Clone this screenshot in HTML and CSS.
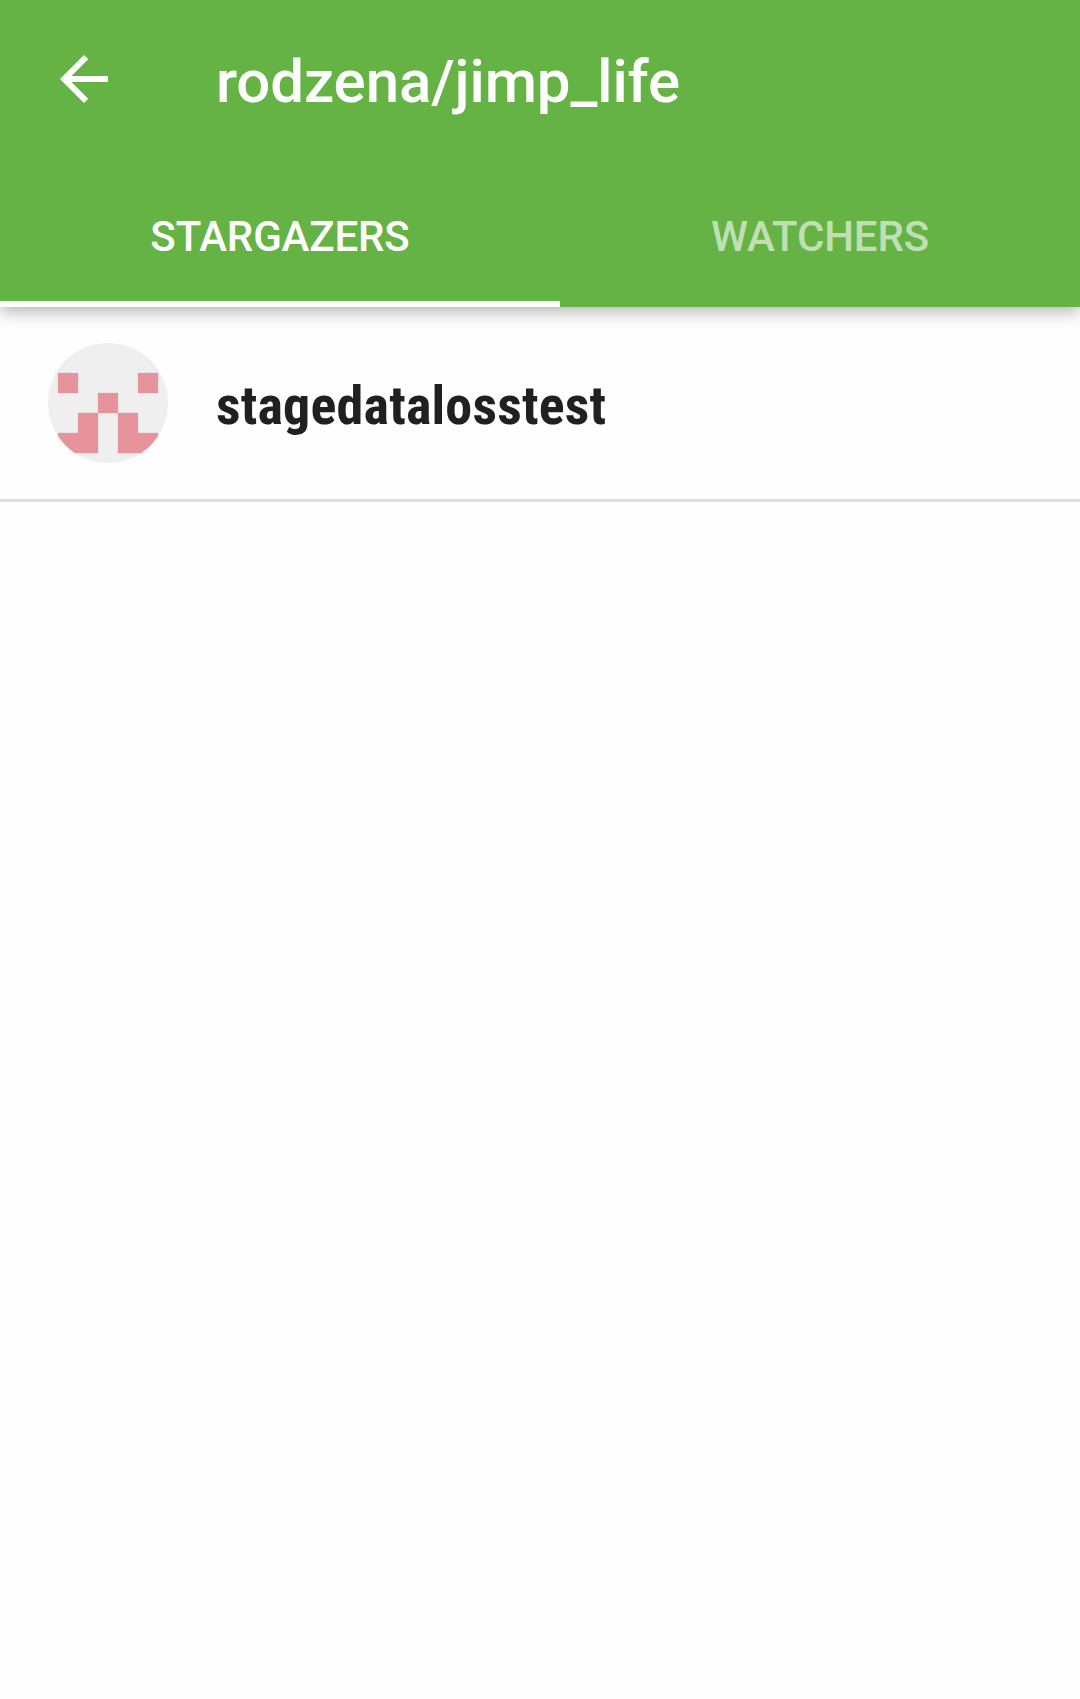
FILE: index.html
```html
<!DOCTYPE html>
<html lang="en">
<head>
<meta charset="utf-8">
<title>rodzena/jimp_life</title>
<link rel="stylesheet" href="styles.css">
</head>
<body>
<header class="appbar">
  <div class="toolbar">
    <svg class="back" viewBox="0 0 24 24" aria-label="Back"><path d="M20 11H7.83l5.59-5.59L12 4l-8 8 8 8 1.41-1.41L7.83 13H20v-2z"/></svg>
    <h1 class="title">rodzena/jimp_life</h1>
  </div>
  <nav class="tabs">
    <a class="tab tab-active"><span class="tab-label">STARGAZERS</span></a>
    <a class="tab"><span class="tab-label">WATCHERS</span></a>
  </nav>
</header>
<main class="list">
  <div class="row">
    <svg class="avatar" viewBox="0 0 120 120">
      <clipPath id="round"><circle cx="60" cy="60" r="60"/></clipPath>
      <g clip-path="url(#round)">
        <path fill="#efefef" d="M0 0h120v120H0z"/>
        <path fill="#e6939b" stroke="#e6939b" stroke-opacity=".25" d="M10 30h20v20H10zM90 30h20v20H90zM50 50h20v20H50zM30 70h20v40H10V90h20zM70 70h20v20h20v20H70z"/>
      </g>
    </svg>
    <span class="name">stagedatalosstest</span>
  </div>
</main>
</body>
</html>
```
FILE: styles.css
```css
body {
  margin: 0;
  min-height: 1699px;
  background: #fefefe;
  font-family: Roboto, sans-serif;
}
.appbar {
  position: relative;
  height: 307px;
  background: #65b345;
  color: #fff;
  box-shadow: 0 5px 15px rgba(0, 0, 0, 0.29);
}
.toolbar {
  display: flex;
  align-items: center;
  height: 163px;
}
.back {
  width: 72px;
  height: 72px;
  margin: -5px 96px 0 48px;
  fill: #fff;
}
.title {
  margin: 0;
  font-size: 60px;
  font-weight: 500;
  line-height: 72px;
  letter-spacing: -0.1px;
}
.tabs {
  display: flex;
  height: 144px;
}
.tab {
  box-sizing: border-box;
  width: 560px;
  flex: none;
  padding-top: 49px;
  border-bottom: 6px solid transparent;
  text-align: center;
  font-size: 42px;
  font-weight: 500;
  line-height: 50px;
  letter-spacing: -0.15px;
  color: rgba(255, 255, 255, 0.6);
}
.tab + .tab {
  width: 520px;
}
.tab-active {
  color: #fff;
  border-color: #fff;
}
.row {
  box-sizing: border-box;
  display: flex;
  align-items: center;
  height: 195px;
  padding: 0 48px;
  gap: 48px;
  border-bottom: 3px solid #dedede;
}
.avatar {
  width: 120px;
  height: 120px;
}
.name {
  padding-top: 5px;
  font-family: "Roboto Condensed", Roboto, sans-serif;
  font-size: 54px;
  font-stretch: 75%;
  font-weight: 700;
  line-height: 64px;
  letter-spacing: 0.2px;
  color: #202020;
}
```
